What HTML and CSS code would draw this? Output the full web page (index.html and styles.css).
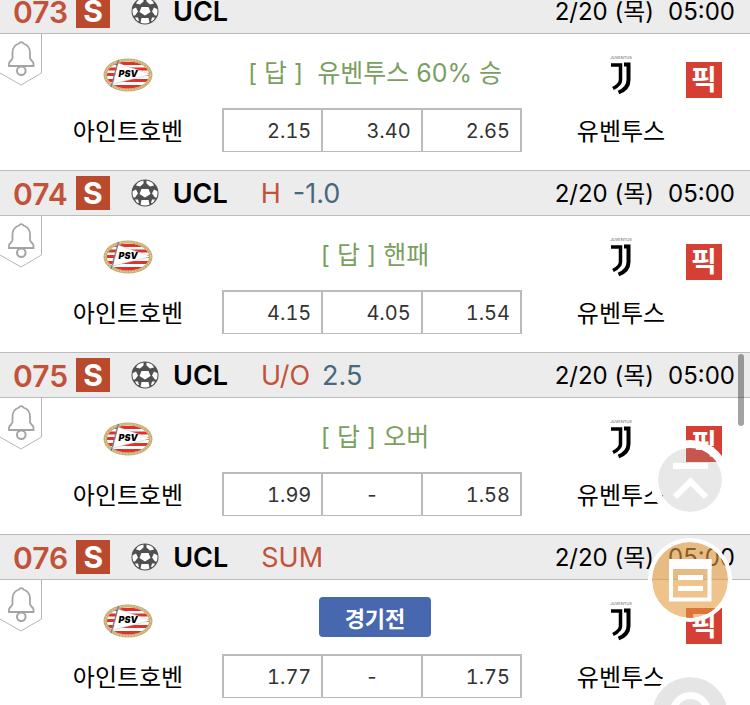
FILE: index.html
```
<!DOCTYPE html>
<html lang="ko">
<head>
  <meta charset="UTF-8">
  <meta name="viewport" content="width=device-width, initial-scale=1.0">
  <title>UCL 경기 목록</title>
  <link rel="stylesheet" href="styles.css">
</head>
<body>

<svg class="defs" aria-hidden="true">
  <symbol id="ball" viewBox="0 0 28 28">
    <clipPath id="round"><circle cx="14" cy="14" r="12.500"/></clipPath>
    <circle cx="14" cy="14" r="13.500" fill="#505050"/>
    <g fill="#fff" clip-path="url(#round)">
      <path d="M10.500 10h7l2 5-5.500 3.500L8.500 15z"/>
      <path d="M7.500 2l5-1v3.500L9 7.500 5 6.500z"/>
      <path d="M20.500 2l-5-1v3.500L19 7.500l4-1z"/>
      <path d="M1 12.500l4-2 2 4-3 4H1z"/>
      <path d="M27 12.500l-4-2-2 4 3 4h3z"/>
      <path d="M10.500 21h7l1 4.500-2 1.500h-5l-2-1.500z"/>
      <path d="M4 20.500h3l1 3.500-2 .5z"/>
      <path d="M24 20.500h-3L20 24l2 .5z"/>
    </g>
  </symbol>
  <symbol id="bell" viewBox="0 0 42 52">
    <path d="M41.500 0v39L21 51 0 39" fill="none" stroke="#b5b5b5"/>
    <path d="M19 9.500a2.500 2.500 0 0 1 4.500 0c4.500 1.500 6.500 5 6.500 9v5.500c0 2 3.500 3.500 3.500 5.500v2.500H9v-2.500c0-2 3.500-3.500 3.500-5.500v-5.500c0-4 2-7.500 6.500-9z" fill="none" stroke="#a4a4a4" stroke-width="1.800"/>
    <circle cx="21.300" cy="36.800" r="4.300" fill="#fff" stroke="#a4a4a4" stroke-width="2"/>
  </symbol>
  <symbol id="psv" viewBox="0 0 50 34">
    <clipPath id="oval"><ellipse cx="25" cy="17" rx="21" ry="13.500"/></clipPath>
    <ellipse cx="25" cy="17" rx="24.500" ry="16.500" fill="#c5ad72"/>
    <ellipse cx="25" cy="17" rx="22.700" ry="15" fill="none" stroke="#e8ddbd" stroke-dasharray="1.500 1.500"/>
    <g clip-path="url(#oval)">
      <path d="M0 0h50v34H0z" fill="#fff"/>
      <path d="M0 4h50v3H0zM0 9.500h50v3H0zM0 15h50v3H0zM0 21h50v3H0zM0 27h50v4H0z" fill="#df3229"/>
      <path d="M15 5l33 11.500L10 26z" fill="#fff" stroke="#bbb" stroke-width=".5"/>
    </g>
    <path d="M15.500 2L8 29" stroke="#777d91" stroke-width="1.200"/>
    <text x="15.500" y="19" class="psv-text">PSV</text>
  </symbol>
  <symbol id="juve" viewBox="0 0 22 40">
    <text x="11" y="4" class="juve-text">JUVENTUS</text>
    <path d="M1 10h9.500v15q0 4.500-7.500 8.500" fill="none" stroke="#000" stroke-width="3.500"/>
    <path d="M14 9.500h4.500V25q0 8.500-10 12.500" fill="none" stroke="#000" stroke-width="4"/>
  </symbol>
</svg>

<main class="match-list">
  <article class="match">
    <header class="match-head">
      <span class="num">073</span>
      <span class="badge">S</span>
      <svg class="ball"><use href="#ball"/></svg>
      <b class="league">UCL</b>
      <time class="date"><span>2/20 (목)</span><span>05:00</span></time>
    </header>
    <div class="match-body">
      <button class="alarm" aria-label="알림"><svg><use href="#bell"/></svg></button>
      <div class="team">
        <svg class="logo"><use href="#psv"/></svg>
        <span class="name">아인트호벤</span>
      </div>
      <div class="center">
        <p class="answer">[ 답 ]&nbsp; 유벤투스 60% 승</p>
        <table class="odds"><tr><td>2.15</td><td>3.40</td><td>2.65</td></tr></table>
      </div>
      <div class="away">
        <div class="team">
          <svg class="logo"><use href="#juve"/></svg>
          <span class="name">유벤투스</span>
        </div>
        <button class="pick">픽</button>
      </div>
    </div>
  </article>

  <article class="match">
    <header class="match-head">
      <span class="num">074</span>
      <span class="badge">S</span>
      <svg class="ball"><use href="#ball"/></svg>
      <b class="league">UCL</b>
      <span class="type">H</span>
      <span class="line">-1.0</span>
      <time class="date"><span>2/20 (목)</span><span>05:00</span></time>
    </header>
    <div class="match-body">
      <button class="alarm" aria-label="알림"><svg><use href="#bell"/></svg></button>
      <div class="team">
        <svg class="logo"><use href="#psv"/></svg>
        <span class="name">아인트호벤</span>
      </div>
      <div class="center">
        <p class="answer">[ 답 ] 핸패</p>
        <table class="odds"><tr><td>4.15</td><td>4.05</td><td>1.54</td></tr></table>
      </div>
      <div class="away">
        <div class="team">
          <svg class="logo"><use href="#juve"/></svg>
          <span class="name">유벤투스</span>
        </div>
        <button class="pick">픽</button>
      </div>
    </div>
  </article>

  <article class="match">
    <header class="match-head">
      <span class="num">075</span>
      <span class="badge">S</span>
      <svg class="ball"><use href="#ball"/></svg>
      <b class="league">UCL</b>
      <span class="type">U/O</span>
      <span class="line">2.5</span>
      <time class="date"><span>2/20 (목)</span><span>05:00</span></time>
    </header>
    <div class="match-body">
      <button class="alarm" aria-label="알림"><svg><use href="#bell"/></svg></button>
      <div class="team">
        <svg class="logo"><use href="#psv"/></svg>
        <span class="name">아인트호벤</span>
      </div>
      <div class="center">
        <p class="answer">[ 답 ] 오버</p>
        <table class="odds"><tr><td>1.99</td><td class="none">-</td><td>1.58</td></tr></table>
      </div>
      <div class="away">
        <div class="team">
          <svg class="logo"><use href="#juve"/></svg>
          <span class="name">유벤투스</span>
        </div>
        <button class="pick">픽</button>
      </div>
    </div>
  </article>

  <article class="match">
    <header class="match-head">
      <span class="num">076</span>
      <span class="badge">S</span>
      <svg class="ball"><use href="#ball"/></svg>
      <b class="league">UCL</b>
      <span class="type">SUM</span>
      <time class="date"><span>2/20 (목)</span><span>05:00</span></time>
    </header>
    <div class="match-body">
      <button class="alarm" aria-label="알림"><svg><use href="#bell"/></svg></button>
      <div class="team">
        <svg class="logo"><use href="#psv"/></svg>
        <span class="name">아인트호벤</span>
      </div>
      <div class="center">
        <p class="answer"><button class="state">경기전</button></p>
        <table class="odds"><tr><td>1.77</td><td class="none">-</td><td>1.75</td></tr></table>
      </div>
      <div class="away">
        <div class="team">
          <svg class="logo"><use href="#juve"/></svg>
          <span class="name">유벤투스</span>
        </div>
        <button class="pick">픽</button>
      </div>
    </div>
  </article>
</main>

<nav class="floating">
  <button class="fab fab-top" aria-label="맨 위로">
    <svg viewBox="0 0 64 64" fill="none" stroke="#fff" stroke-width="6">
      <path d="M15 18h35M17 49l15.500-15.500L48 49"/>
    </svg>
  </button>
  <button class="fab fab-slip" aria-label="목록">
    <svg viewBox="0 0 76 76" fill="none" stroke="#fff">
      <path d="M19 19h38.500v38.500H19z" stroke-width="4"/>
      <path d="M17 22h42.500" stroke-width="10"/>
      <path d="M26 35.500h25M26 46.500h25" stroke-width="5"/>
    </svg>
  </button>
  <button class="fab fab-search" aria-label="검색">
    <svg viewBox="0 0 76 76" fill="none" stroke="#fff" stroke-width="7">
      <circle cx="38.500" cy="36" r="17.500"/>
      <path d="M50 50l12 12"/>
    </svg>
  </button>
</nav>
<div class="scroll-thumb"></div>

</body>
</html>
```
FILE: styles.css
```
* {
  box-sizing: border-box;
}
html, body {
  height: 100%;
  overflow: hidden;
}
body {
  margin: 0;
  background: #fff;
  color: #000;
  font-family: Inter, "Noto Sans CJK KR", sans-serif;
  font-size: 24px;
}
button {
  padding: 0;
  border: none;
  background: none;
  font-family: inherit;
  cursor: pointer;
}
svg {
  display: block;
}
.defs {
  position: absolute;
  width: 0;
  height: 0;
}

/* list is scrolled down a little */
.match-list {
  margin-top: -12px;
}
.match-head {
  display: flex;
  align-items: center;
  height: 46px;
  padding: 2px 15px 0 13px;
  background: #ececec;
  border-top: 1px solid #bbb;
  border-bottom: 1px solid #bbb;
  font-size: 27px;
  line-height: 36px;
}
.num {
  color: #c2533a;
  font-size: 30px;
  font-weight: 600;
}
.badge {
  width: 34px;
  height: 34px;
  margin: 0 0 2px 8px;
  background: #b94a2e;
  color: #fff;
  font-size: 30px;
  font-weight: 700;
  line-height: 34px;
  text-align: center;
}
.ball {
  width: 28px;
  height: 28px;
  margin: 0 14px 2px 21px;
}
.league {
  font-weight: 600;
}
.type {
  margin-left: 33px;
  color: #c2533a;
}
.line {
  margin-left: 12px;
  color: #46697f;
}
.date {
  display: flex;
  gap: 14px;
  margin-left: auto;
  font-size: 24px;
}

.match-body {
  position: relative;
  display: grid;
  grid-template-columns: 1fr 300px 1fr;
  height: 136px;
  padding-right: 6px;
}
.alarm {
  position: absolute;
  top: 0;
  left: 0;
}
.alarm svg {
  width: 42px;
  height: 52px;
}
.team {
  flex: 1;
  display: flex;
  flex-direction: column;
  align-items: center;
  padding: 21px 0 0 34px;
}
.logo {
  width: 50px;
  height: 40px;
}
.name {
  margin-top: 15px;
  line-height: 44px;
}
.answer {
  display: flex;
  align-items: center;
  justify-content: center;
  height: 74px;
  margin: 0;
  padding-left: 6px;
  color: #7a9f5f;
  font-size: 25px;
}
.state {
  width: 112px;
  height: 40px;
  border-radius: 4px;
  background: #4768ae;
  color: #fff;
  font-size: 22px;
  font-weight: 700;
}
.odds {
  width: 100%;
  height: 44px;
  table-layout: fixed;
  border-collapse: separate;
  border-spacing: 0;
  border: solid #bbb;
  border-width: 2px 0 1px 2px;
  color: #333;
  font-size: 20px;
  font-variant-numeric: tabular-nums;
}
.odds td {
  padding: 0 10px 0 0;
  border-right: 2px solid #bbb;
  text-align: right;
}
.odds .none {
  padding: 0;
  text-align: center;
}
.away {
  display: flex;
}
.pick {
  width: 36px;
  height: 36px;
  margin: 28px 22px 0 0;
  background: #d44033;
  color: #fff;
  font-size: 28px;
  font-weight: 700;
  line-height: 34px;
}
.psv-text {
  font-size: 9px;
  font-weight: 900;
  font-style: italic;
}
.juve-text {
  fill: #555;
  font-size: 4px;
  text-anchor: middle;
}

.floating {
  position: fixed;
  right: 18px;
  bottom: -52px;
  display: flex;
  flex-direction: column;
  align-items: center;
}
.fab {
  width: 84px;
  height: 84px;
  border: 4px solid #fff;
  border-radius: 50%;
  background-clip: padding-box;
}
.fab-top {
  width: 80px;
  height: 80px;
  border-width: 8px;
  background-color: rgba(160, 160, 160, 0.24);
}
.fab-slip {
  margin-top: 18px;
  background-color: rgba(227, 155, 63, 0.6);
}
.fab-search {
  margin-top: 51px;
  background-color: rgba(160, 160, 160, 0.28);
}
.scroll-thumb {
  position: fixed;
  top: 354px;
  right: 6px;
  width: 6px;
  height: 72px;
  border-radius: 3px;
  background: rgba(0, 0, 0, 0.36);
}
```
